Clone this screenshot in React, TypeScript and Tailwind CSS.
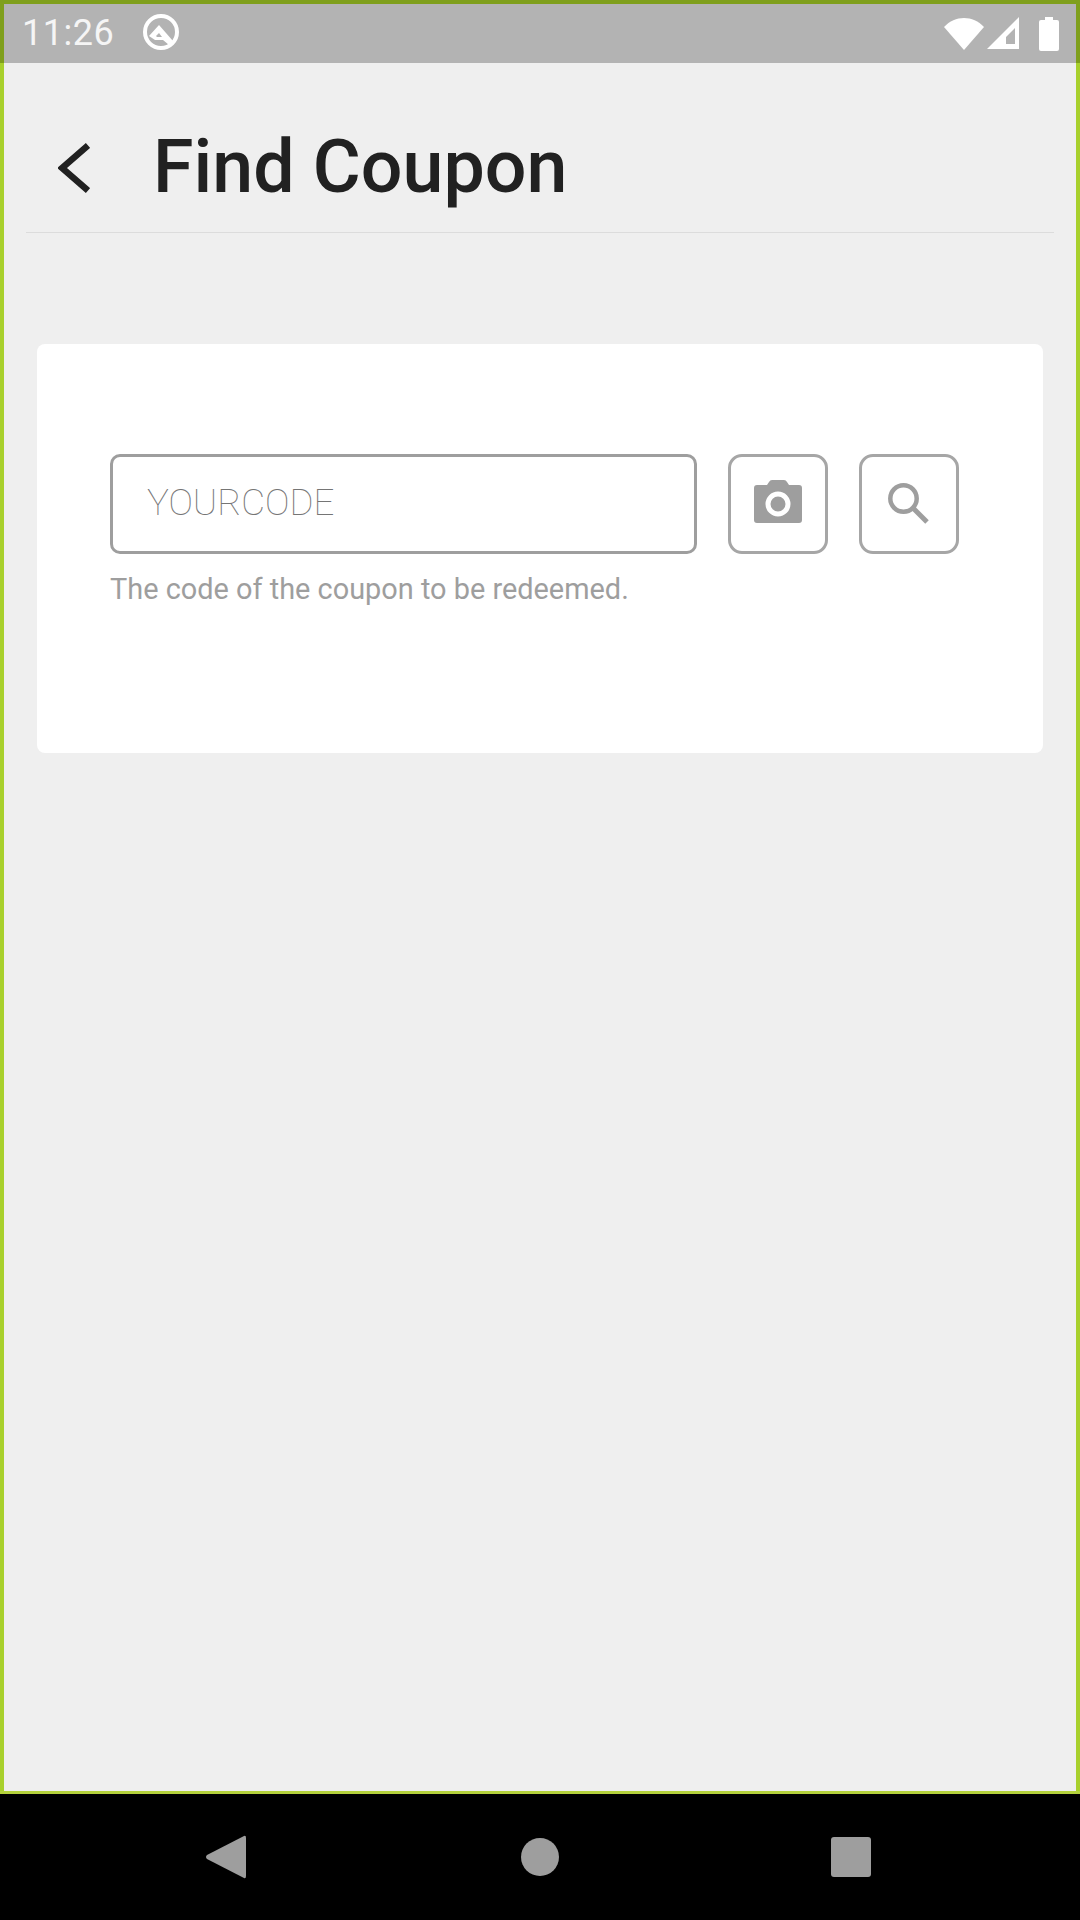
function StatusBar() {
  return (
    <div className="h-[63px] shrink-0 bg-[#b3b3b3] border-t-[4px] border-x-[4px] border-[#7f9f1c] flex items-center pl-[18px] pr-[17px]">
      <span className="mb-[2px] text-[36px] leading-none font-normal tracking-[0.5px] text-[#f5f5f5]">11:26</span>
      <svg className="ml-[28px] mb-[3px]" width="38" height="38" viewBox="0 0 38 38" fill="none">
        <circle cx="19" cy="19" r="16" stroke="#fff" strokeWidth="4" />
        <path d="M7 23 L17 12 L31 28 L27 32 L21 27 H13 Z" fill="#fff" />
        <path d="M14 23 L17 20 L20 24 H15 Z" fill="#b3b3b3" />
      </svg>
      <div className="ml-auto flex items-center gap-[19px]">
        <div className="flex items-center gap-[3px]">
          <svg width="40" height="33" viewBox="0 0 40 33">
            <path d="M0 10 C11 -2 29 -2 40 10 L20 33 Z" fill="#fff" />
          </svg>
          <svg width="33" height="33" viewBox="0 0 33 33">
            <path fillRule="evenodd" d="M0 32 L32 0 V32 Z M19 27 H28 V11 L19 20 Z" fill="#fff" />
          </svg>
        </div>
        <svg width="20" height="34" viewBox="0 0 20 34">
          <path d="M6 0 H14 V3 H18 Q20 3 20 5 V32 Q20 34 18 34 H2 Q0 34 0 32 V5 Q0 3 2 3 H6 Z" fill="#fff" />
        </svg>
      </div>
    </div>
  );
}

function NavBar() {
  return (
    <div className="h-[129px] shrink-0 bg-black border-t-[3px] border-[#b4d23c] flex items-center">
      <div className="w-full flex items-center justify-between pl-[206px] pr-[209px]">
        <svg width="40" height="46" viewBox="0 0 40 44">
          <path d="M38 1 Q40 0 40 3 V41 Q40 44 38 43 L1 24 Q-1 22 1 20 Z" fill="#9e9e9e" />
        </svg>
        <div className="ml-[3px] w-[38px] h-[38px] rounded-full bg-[#9e9e9e]" />
        <div className="w-[40px] h-[40px] rounded-[3px] bg-[#9e9e9e]" />
      </div>
    </div>
  );
}

export default function App() {
  return (
    <div className="w-[1080px] h-[1920px] flex flex-col overflow-hidden font-['Roboto',sans-serif] bg-[#efefef]">
      <StatusBar />

      <main className="flex-1 flex flex-col border-x-[4px] border-[#a8d02c] px-[22px]">
        <header className="h-[170px] shrink-0 flex items-center pt-[41px] border-b border-[#dcdcdc]">
          <svg className="ml-[32px]" width="32" height="50" viewBox="0 0 32 50" fill="none">
            <path d="M30 2.5 L4 25 L30 47.5" stroke="#212121" strokeWidth="6.5" />
          </svg>
          <h1 className="ml-[63px] text-[73.5px] leading-none font-medium text-[#212121]">Find Coupon</h1>
        </header>

        <section className="mt-[111px] mx-[11px] h-[409px] rounded-[8px] bg-white pt-[110px] pl-[73px]">
          <div className="flex items-center">
            <div className="w-[587px] h-[100px] rounded-[10px] border-[3px] border-[#9e9e9e] flex items-center pl-[34px] pb-[2px]">
              <span className="text-[36.7px] font-thin text-[#757575]">YOURCODE</span>
            </div>
            <button className="ml-[31px] w-[100px] h-[100px] rounded-[14px] border-[3px] border-[#a6a6a6] flex items-center justify-center">
              <svg className="mb-[5px]" width="48" height="43" viewBox="0 0 48 43">
                <path
                  fillRule="evenodd"
                  d="M13 5 L15 2 Q16 0 18 0 H30 Q32 0 33 2 L35 5 H45 Q48 5 48 8 V40 Q48 43 45 43 H3 Q0 43 0 40 V8 Q0 5 3 5 Z M24 11.5 A12.5 12.5 0 1 0 24 36.5 A12.5 12.5 0 1 0 24 11.5 Z M24 16.5 A7.5 7.5 0 1 1 24 31.5 A7.5 7.5 0 1 1 24 16.5 Z"
                  fill="#9e9e9e"
                />
              </svg>
            </button>
            <button className="ml-[31px] w-[100px] h-[100px] rounded-[14px] border-[3px] border-[#a6a6a6] flex items-center justify-center">
              <svg width="42" height="42" viewBox="0 0 42 42" fill="none" stroke="#9e9e9e">
                <circle cx="15.5" cy="15.5" r="13.2" strokeWidth="4.5" />
                <path d="M25 25 L39 39" strokeWidth="5" />
              </svg>
            </button>
          </div>
          <p className="mt-[18px] text-[28.9px] leading-[34px] text-[#9e9e9e]">The code of the coupon to be redeemed.</p>
        </section>
      </main>

      <NavBar />
    </div>
  );
}
